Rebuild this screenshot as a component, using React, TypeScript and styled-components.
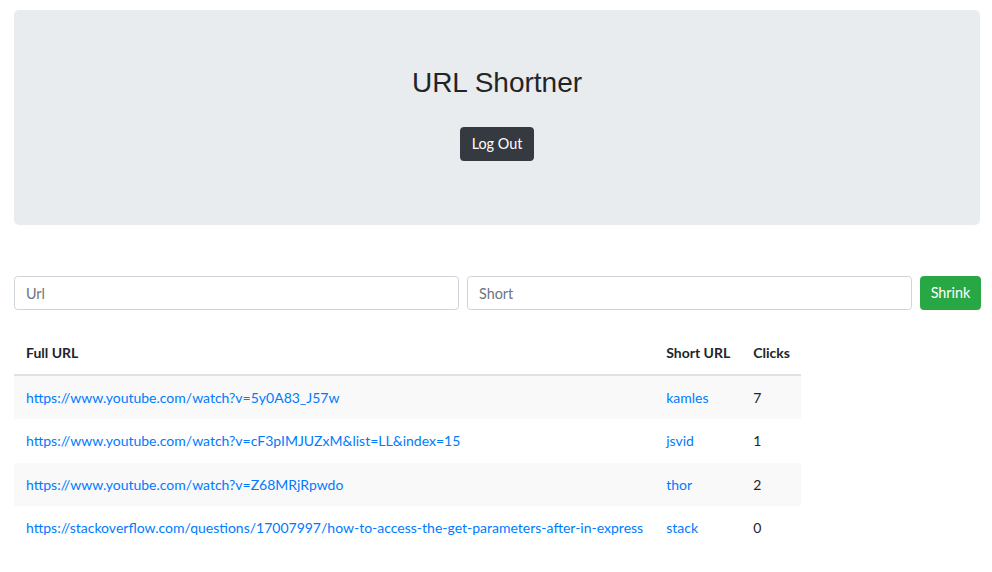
import React from "react";
import styled, { createGlobalStyle } from "styled-components";

const FONT = `"Lato", "Open Sans", sans-serif`;

const GlobalStyle = createGlobalStyle`
  html, body { margin: 0; padding: 0; background: #ffffff; }
  body {
    font-family: ${FONT};
    font-size: 14px;
    line-height: 21.6px;
    color: #212529;
  }
  * { box-sizing: border-box; }
`;

const Page = styled.div`
  padding: 10px 11px 0 14px;
`;

const Jumbotron = styled.header`
  background: #e9ecef;
  border-radius: 5px;
  height: 215px;
  margin-right: 1px;
  padding-top: 56px;
  display: flex;
  flex-direction: column;
  align-items: center;
`;

const Title = styled.h2`
  margin: 0;
  font-family: "Liberation Sans", Arial, sans-serif;
  font-weight: 400;
  font-size: 28px;
  line-height: 34px;
  color: #212529;
`;

const Button = styled.button<{ $variant: "dark" | "success" }>`
  font-family: ${FONT};
  font-size: 14.4px;
  line-height: 1.5;
  height: 34px;
  padding: 0 11px;
  border-radius: 3.6px;
  border: 1px solid ${(p) => (p.$variant === "dark" ? "#343a40" : "#28a745")};
  background: ${(p) => (p.$variant === "dark" ? "#343a40" : "#28a745")};
  color: #ffffff;
  cursor: pointer;
`;

const LogOutButton = styled(Button)`
  margin-top: 27px;
  width: 74px;
  padding: 0;
`;

const Form = styled.form`
  margin-top: 51px;
  display: flex;
  gap: 8px;
`;

const Input = styled.input`
  flex: 1;
  min-width: 0;
  height: 34px;
  padding: 0 11px;
  border: 1px solid #ced4da;
  border-radius: 3.6px;
  font-family: ${FONT};
  font-size: 14.4px;
  color: #495057;
  background: #fff;
  &::placeholder { color: #6c757d; }
`;

const ShrinkButton = styled(Button)`
  width: 61px;
  padding: 0;
`;

const Table = styled.table`
  margin-top: 21px;
  border-collapse: collapse;
`;

const Th = styled.th`
  text-align: left;
  font-weight: 700;
  padding: 11px 11px 10px 12px;
  border-bottom: 2px solid #dee2e6;
  white-space: nowrap;
`;

const Row = styled.tr<{ $striped: boolean }>`
  background: ${(p) => (p.$striped ? "#f9f9f9" : "transparent")};
  & + & td { border-top: 1px solid #dee2e6; }
`;

const Td = styled.td`
  padding: 11px 11px 11px 12px;
  white-space: nowrap;
  height: 43.5px;
`;

const Link = styled.a`
  color: #007bff;
  text-decoration: none;
`;

const rows = [
  { full: "https://www.youtube.com/watch?v=5y0A83_J57w", short: "kamles", clicks: 7 },
  { full: "https://www.youtube.com/watch?v=cF3pIMJUZxM&list=LL&index=15", short: "jsvid", clicks: 1 },
  { full: "https://www.youtube.com/watch?v=Z68MRjRpwdo", short: "thor", clicks: 2 },
  { full: "https://stackoverflow.com/questions/17007997/how-to-access-the-get-parameters-after-in-express", short: "stack", clicks: 0 },
];

export default function App() {
  return (
    <Page>
      <GlobalStyle />
      <Jumbotron>
        <Title>URL Shortner</Title>
        <LogOutButton $variant="dark" type="button">Log Out</LogOutButton>
      </Jumbotron>
      <Form onSubmit={(e) => e.preventDefault()}>
        <Input placeholder="Url" />
        <Input placeholder="Short" />
        <ShrinkButton $variant="success" type="submit">Shrink</ShrinkButton>
      </Form>
      <Table>
        <thead>
          <tr>
            <Th>Full URL</Th>
            <Th>Short URL</Th>
            <Th>Clicks</Th>
          </tr>
        </thead>
        <tbody>
          {rows.map((r, i) => (
            <Row key={r.short} $striped={i % 2 === 0}>
              <Td><Link href="#">{r.full}</Link></Td>
              <Td><Link href="#">{r.short}</Link></Td>
              <Td>{r.clicks}</Td>
            </Row>
          ))}
        </tbody>
      </Table>
    </Page>
  );
}
